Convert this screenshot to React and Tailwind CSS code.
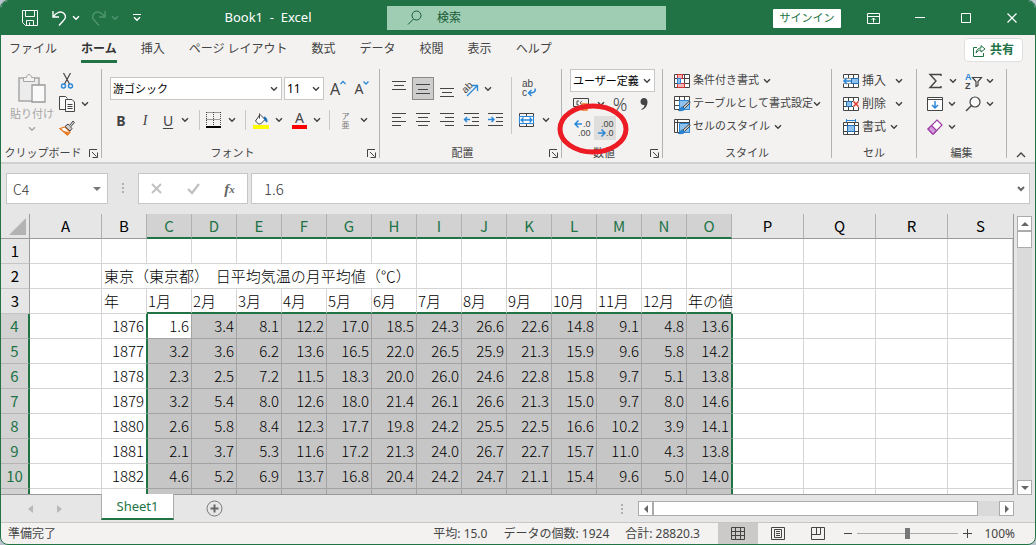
import React, { useState } from 'react';
import clsx from 'clsx';

const UI_FONT = "font-['Noto_Sans','Noto_Sans_CJK_JP',sans-serif]";
const SHEET_FONT = "font-['Noto_Sans_CJK_JP','Noto_Sans',sans-serif] font-light";

const ABAS = ['ファイル', 'ホーム', '挿入', 'ページ レイアウト', '数式', 'データ', '校閲', '表示', 'ヘルプ'];

const COLUNAS = ['A', 'B', 'C', 'D', 'E', 'F', 'G', 'H', 'I', 'J', 'K', 'L', 'M', 'N', 'O', 'P', 'Q', 'R', 'S'];
const MESES = ['1月', '2月', '3月', '4月', '5月', '6月', '7月', '8月', '9月', '10月', '11月', '12月', '年の値'];

const DADOS = [
  ['1876', '1.6', '3.4', '8.1', '12.2', '17.0', '18.5', '24.3', '26.6', '22.6', '14.8', '9.1', '4.8', '13.6'],
  ['1877', '3.2', '3.6', '6.2', '13.6', '16.5', '22.0', '26.5', '25.9', '21.3', '15.9', '9.6', '5.8', '14.2'],
  ['1878', '2.3', '2.5', '7.2', '11.5', '18.3', '20.0', '26.0', '24.6', '22.8', '15.8', '9.7', '5.1', '13.8'],
  ['1879', '3.2', '5.4', '8.0', '12.6', '18.0', '21.4', '26.1', '26.6', '21.3', '15.0', '9.7', '8.0', '14.6'],
  ['1880', '2.6', '5.8', '8.4', '12.3', '17.7', '19.8', '24.2', '25.5', '22.5', '16.6', '10.2', '3.9', '14.1'],
  ['1881', '2.1', '3.7', '5.3', '11.6', '17.2', '21.3', '24.0', '26.7', '22.7', '15.7', '11.0', '4.3', '13.8'],
  ['1882', '4.6', '5.2', '6.9', '13.7', '16.8', '20.4', '24.2', '24.7', '21.1', '15.4', '9.6', '5.0', '14.0'],
  ['', '', '', '', '', '', '', '', '', '', '', '', '', ''],
];

function Icone({ w = 16, h = 16, className, children }) {
  return (
    <svg width={w} height={h} viewBox={`0 0 ${w} ${h}`} fill="none" stroke="#444" className={clsx('shrink-0 overflow-visible', className)} aria-hidden="true">
      {children}
    </svg>
  );
}

function Seta({ className, cor = '#444' }) {
  return (
    <svg width="8" height="6" viewBox="0 0 8 6" fill="none" stroke={cor} strokeWidth="1.5" className={clsx('shrink-0', className)} aria-hidden="true">
      <path d="M1 1.2 4 4.2 7 1.2" />
    </svg>
  );
}

function Letra({ x, y, tam = 9, cor = '#444', ...resto }) {
  return <text x={x} y={y} fontSize={tam} stroke="none" fill={cor} fontFamily="Liberation Sans" {...resto} />;
}

function Botao({ label, className, children }) {
  return (
    <button type="button" aria-label={label} className={clsx('flex items-center justify-center shrink-0', className)}>
      {children}
    </button>
  );
}

function Grupo({ titulo, largura, launcher, children }) {
  return (
    <section className={clsx('relative flex flex-col shrink-0 h-[89px] border-r border-[#b3b3b3]', largura)}>
      <div className="h-[76px] shrink-0">{children}</div>
      <div className={clsx('relative flex items-center justify-center h-4 shrink-0 text-[11px] leading-4 text-[#444]', launcher && 'pr-4')}>
        {titulo}
        {launcher && (
          <button type="button" aria-label={`${titulo}の設定`} className="absolute right-[3px] top-1">
            <Icone w={9} h={9}>
              <path d="M.5 8V.5H8M3 3l4.5 4.5M8.5 3.500v5h-5" />
            </Icone>
          </button>
        )}
      </div>
    </section>
  );
}

function Caixa({ label, valor, className }) {
  return (
    <div className={clsx('relative flex h-[23px] border border-[#c6c6c6] bg-white', className)}>
      <select aria-label={label} defaultValue={valor} className="w-full appearance-none bg-transparent pl-[2px] leading-5 text-black outline-none">
        <option>{valor}</option>
      </select>
      <Seta className="absolute right-[3px] top-2 pointer-events-none" />
    </div>
  );
}

function Divisor({ className }) {
  return <span className={clsx('w-px shrink-0 bg-[#c8c8c8]', className)} />;
}

function Linhas({ linhas }) {
  return (
    <Icone w={14} h={16}>
      {linhas.map(([x1, x2, y]) => <path key={y} d={`M${x1} ${y}.5H${x2}`} />)}
    </Icone>
  );
}

function BarraTitulo() {
  return (
    <header className="flex items-center h-[34px] shrink-0 bg-[#217346] text-white">
      <div className="flex items-center w-[386px] shrink-0 pl-[21px]">
        <Botao label="上書き保存">
          <Icone>
            <path stroke="#fff" d="M.5.5h15v15H3.500l-3-3zM3.500.5v6h9v-6M4.500 15.500v-5h7v5M7.500 12.500v3" />
          </Icone>
        </Botao>
        <Botao label="元に戻す" className="ml-[14px] gap-[5px]">
          <Icone w={15}>
            <path stroke="#fff" strokeWidth="1.4" d="M1 1v6h6M1.500 6.500C4 2.500 9 .5 12 3.500c2.500 2.500 1.500 5-.5 7L7 15.500" />
          </Icone>
          <Seta cor="#fff" />
        </Botao>
        <Botao label="やり直し" className="ml-[11px] gap-[5px]">
          <Icone w={15}>
            <path stroke="#4f9470" strokeWidth="1.4" d="M14 1v6H8M13.500 6.500C11 2.500 6 .5 3 3.500c-2.500 2.500-1.500 5 .5 7L8 15.500" />
          </Icone>
          <Seta cor="#4f9470" />
        </Botao>
        <Botao label="クイック アクセス ツール バーのカスタマイズ" className="ml-[14px]">
          <Icone w={8} h={8}>
            <path stroke="#fff" d="M0 .5h8" />
            <path stroke="#fff" strokeWidth="1.400" d="M1 3.200 4 6.200l3-3" />
          </Icone>
        </Botao>
        <h1 className="flex-1 pl-2 text-center text-[13px] whitespace-pre">Book1  -  Excel</h1>
      </div>
      <label className="flex flex-1 items-center h-6 bg-[#9fcdb3] pl-5">
        <Icone>
          <circle stroke="#185c37" cx="9.500" cy="5.500" r="4.500" />
          <path stroke="#185c37" d="M6.500 9 1 14.500" />
        </Icone>
        <input type="search" aria-label="検索" placeholder="検索" className="ml-[14px] w-full bg-transparent text-[12px] leading-5 outline-none placeholder:text-[#185c37]" />
      </label>
      <div className="flex items-center shrink-0 ml-[107px] pr-[18px]">
        <button type="button" className="flex items-center justify-center w-[68px] h-[19px] rounded-[1px] bg-white text-[11px] leading-4 text-[#217346]">サインイン</button>
        <Botao label="リボンの表示オプション" className="ml-[26px]">
          <Icone w={13} h={11}>
            <path stroke="#fff" d="M.5.5h12v10H.5zM.5 3.500h12M6.500 9.500V5M4.500 7l2-2 2 2" />
          </Icone>
        </Botao>
        <Botao label="最小化" className="ml-[35px]">
          <Icone w={10} h={10}><path stroke="#fff" d="M0 4.500h10" /></Icone>
        </Botao>
        <Botao label="最大化" className="ml-9">
          <Icone w={10} h={10}><path stroke="#fff" d="M.5.5h9v9h-9z" /></Icone>
        </Botao>
        <Botao label="閉じる" className="ml-9">
          <Icone w={10} h={10}><path stroke="#fff" strokeWidth="1.200" d="M.5.5l9 9M9.500.5l-9 9" /></Icone>
        </Botao>
      </div>
    </header>
  );
}

function Abas() {
  return (
    <nav className="flex items-start h-[34px] shrink-0 pt-[3px] pl-2 pr-3">
      <div className="flex gap-6">
        {ABAS.map(aba => (
          <button
            key={aba}
            type="button"
            className={clsx(
              'h-[25px] border-b-3 text-[12px] leading-5 whitespace-nowrap',
              aba === 'ホーム' ? 'border-[#217346] font-bold text-[#333]' : 'border-transparent text-[#444]'
            )}
          >
            {aba}
          </button>
        ))}
      </div>
      <button type="button" className="ml-auto flex items-center justify-center gap-1 w-[59px] h-6 rounded-sm border border-[#e1dfdd] bg-white text-[12px] font-bold text-[#217346]">
        <Icone w={13} h={13}>
          <path stroke="#217346" d="M4 3.500H.5v9h10V9M3 9c.5-3.500 2.500-5 5-5V1.500L12 5 8 8V6C6 6 4.500 7 3 9z" />
        </Icone>
        共有
      </button>
    </nav>
  );
}

function AreaTransferencia() {
  return (
    <Grupo titulo="クリップボード" largura="w-[101px]" launcher>
      <div className="flex pl-2">
        <button type="button" className="flex flex-col items-center w-[46px] pt-1 text-[11px] leading-4 text-[#a6a6a6]">
          <Icone w={28} h={31}>
            <path fill="#ececec" stroke="#a6a6a6" strokeWidth="1.500" d="M1 5h20v23H1z" />
            <path fill="#f3f2f1" stroke="#a6a6a6" d="M5.500 8.500v-4h3c0-4 5-4 5 0h3v4z" />
            <path fill="#fafafa" stroke="#999" strokeWidth="1.300" d="M14 12h13v17H14z" />
          </Icone>
          <span className="mt-[2px]">貼り付け</span>
          <Seta cor="#a6a6a6" className="mt-1" />
        </button>
        <div className="flex flex-col pl-1">
          <Botao label="切り取り" className="w-4 h-[23px]">
            <Icone>
              <path strokeWidth="1.200" d="M4.500 0l6 11M11.500 0l-6 11" />
              <circle stroke="#2b88d8" strokeWidth="1.400" cx="4.500" cy="13" r="2" />
              <circle stroke="#2b88d8" strokeWidth="1.400" cx="11.500" cy="13" r="2" />
            </Icone>
          </Botao>
          <Botao label="コピー" className="h-6 gap-[6px]">
            <Icone>
              <path d="M6 13.500H.5V.5h6l2 2M9 3.500h4l2.500 2.500v9.500h-9v-12z" fill="#f9f9f9" />
              <path d="M8.500 8.500h5M8.500 10.500h5M8.500 12.500h5" />
            </Icone>
            <Seta />
          </Botao>
          <Botao label="書式のコピー/貼り付け" className="w-4 h-6">
            <Icone>
              <path fill="#fff" stroke="#e8781e" strokeWidth="1.300" d="M1 8.500l5-1.500 5 5-2.500 3z" />
              <path fill="#e8781e" stroke="none" d="M4 11l6 1-2 3z" />
              <path fill="#d2d0ce" d="M6 6.500 9 4l1.500 1.500L14 1l1.500 1.500L11.500 7 13 8.500 11 11z" />
            </Icone>
          </Botao>
        </div>
      </div>
    </Grupo>
  );
}

function Fonte() {
  return (
    <Grupo titulo="フォント" largura="w-[278px]" launcher>
      <div className="flex items-center pt-2 pl-2">
        <Caixa label="フォント" valor="游ゴシック" className="w-[172px] text-[11px]" />
        <Caixa label="フォント サイズ" valor="11" className="w-10 ml-[2px] text-[12px]" />
        <Botao label="フォント サイズの拡大" className="w-6 ml-[2px] text-[16px] leading-5 text-[#444]">
          A<Icone w={6} h={10} className="self-start"><path stroke="#2b88d8" strokeWidth="1.300" d="M.5 5 3 2.500 5.500 5" /></Icone>
        </Botao>
        <Botao label="フォント サイズの縮小" className="w-6 text-[14px] leading-5 text-[#444]">
          A<Icone w={6} h={10} className="self-start"><path stroke="#2b88d8" strokeWidth="1.300" d="M.5 2.500 3 5l2.500-2.500" /></Icone>
        </Botao>
      </div>
      <div className="flex items-center h-6 mt-2 pl-[7px] text-[14px] text-[#444]">
        <Botao label="太字" className="w-6 font-bold">B</Botao>
        <Botao label="斜体" className="w-6 italic font-['Liberation_Serif',serif]">I</Botao>
        <Botao label="下線" className="w-[22px] underline underline-offset-2">U</Botao>
        <Botao label="下線の種類" className="w-3"><Seta /></Botao>
        <Divisor className="h-5 ml-2 mr-[6px]" />
        <Botao label="罫線" className="w-7 gap-[7px] ml-px">
          <Icone w={15}>
            <path strokeDasharray="1 1" d="M.5.5h14M.5 7.500h14M.5 0v14M14.500 0v14M7.500 0v14" />
            <path stroke="#000" strokeWidth="2" d="M0 15h15" />
          </Icone>
          <Seta />
        </Botao>
        <Divisor className="h-5 ml-[10px] mr-[7px]" />
        <Botao label="塗りつぶしの色" className="w-[29px] gap-[6px]">
          <Icone h={17}>
            <path fill="#fff" d="M6.500 1.500v5M7 2.500l5 5-4.500 4.500h-2L2.500 9z" />
            <path fill="#1e6fb8" stroke="#1e6fb8" d="M11 5c2 0 3 1.500 3 5-1.500-.500-2.500-2-3-5z" />
            <path stroke="#ff0" strokeWidth="4" d="M0 15h16" />
          </Icone>
          <Seta />
        </Botao>
        <Botao label="フォントの色" className="w-[29px] gap-[6px] ml-[10px]">
          <span className="flex items-center justify-center w-4 h-[17px] border-b-4 border-[#f00] text-[14px] leading-3">A</span>
          <Seta />
        </Botao>
        <Divisor className="h-5 ml-2 mr-[10px]" />
        <Botao label="ふりがなの表示/非表示" className="w-[29px] gap-[10px]">
          <span className="flex flex-col items-center text-[8px] leading-[9px] text-[#777]"><span>ア</span><span>亜</span></span>
          <Seta />
        </Botao>
      </div>
    </Grupo>
  );
}

function Alinhamento() {
  return (
    <Grupo titulo="配置" largura="w-[182px]" launcher>
      <div className="flex pt-2 pl-[7px]">
        <div>
          <div className="flex items-center h-[23px]">
            <Botao label="上揃え" className="w-6"><Linhas linhas={[[0, 14, 0], [2, 12, 4], [0, 14, 8]]} /></Botao>
            <Botao label="上下中央揃え" className="w-[22px] h-[23px] mx-px border border-[#8a8a8a] bg-[#cdcdcd]"><Linhas linhas={[[0, 14, 3], [2, 12, 8], [0, 14, 12]]} /></Botao>
            <Botao label="下揃え" className="w-6"><Linhas linhas={[[0, 14, 7], [2, 12, 11], [0, 14, 15]]} /></Botao>
            <Botao label="方向" className="w-7 gap-[5px] ml-1">
              <Icone w={17}>
                <Letra x="0" y="10" tam={10} transform="rotate(-45 5 7)">ab</Letra>
                <path stroke="#2b88d8" strokeWidth="1.300" d="M5 15 15 5M10 4.500h5.500V10" />
              </Icone>
              <Seta />
            </Botao>
          </div>
          <div className="flex items-center h-6 mt-2">
            <Botao label="左揃え" className="w-6"><Linhas linhas={[[0, 14, 1], [0, 9, 5], [0, 14, 9], [0, 9, 13]]} /></Botao>
            <Botao label="中央揃え" className="w-6"><Linhas linhas={[[0, 14, 1], [2, 12, 5], [0, 14, 9], [2, 12, 13]]} /></Botao>
            <Botao label="右揃え" className="w-6"><Linhas linhas={[[0, 14, 1], [5, 14, 5], [0, 14, 9], [5, 14, 13]]} /></Botao>
            <Botao label="インデントを減らす" className="w-6">
              <Icone w={15}>
                <path d="M0 1.500h15M8 5.500h7M8 9.500h7M0 13.500h15" />
                <path stroke="#2b88d8" strokeWidth="1.400" d="M0 7.500h6M3 5 .5 7.500 3 10" />
              </Icone>
            </Botao>
            <Botao label="インデントを増やす" className="w-6">
              <Icone w={15}>
                <path d="M0 1.500h15M8 5.500h7M8 9.500h7M0 13.500h15" />
                <path stroke="#2b88d8" strokeWidth="1.400" d="M0 7.500h6M3.500 5 6 7.500 3.500 10" />
              </Icone>
            </Botao>
          </div>
        </div>
        <Divisor className="h-[57px] ml-1" />
        <div className="pl-[6px]">
          <Botao label="折り返して全体を表示する" className="w-[22px] h-[23px]">
            <Icone>
              <Letra x="1" y="6" tam={10}>ab</Letra>
              <Letra x="1" y="15" tam={10}>c</Letra>
              <path stroke="#2b88d8" strokeWidth="1.500" d="M14 7.500c1 3-1 4.500-6 4.500M10.500 9l-3 3 3 3" />
            </Icone>
          </Botao>
          <Botao label="セルを結合して中央揃え" className="h-6 mt-2 pl-px gap-2">
            <Icone w={15}>
              <path d="M.5 1.500h14v13H.5zM7.500 1.500v3M7.500 11.500v3" />
              <path fill="#fff" stroke="#2b88d8" d="M.5 4.500h14v7H.5z" />
              <path stroke="#2b88d8" strokeWidth="1.300" d="M2 8h11M4.500 5.500 2 8l2.500 2.500M10.500 5.500 13 8l-2.500 2.500" />
            </Icone>
            <Seta />
          </Botao>
        </div>
      </div>
    </Grupo>
  );
}

function Numero() {
  return (
    <Grupo titulo="数値" largura="w-[101px]" launcher>
      <div className="pl-2">
        <Caixa label="表示形式" valor="ユーザー定義" className="w-[85px] text-[11px]" />
        <div className="flex items-center h-6 text-[#444]">
          <Botao label="通貨表示形式" className="gap-2 pl-[3px]">
            <Icone>
              <path d="M.5 2.500h15v8H.5zM6 5h-2v4h2M9 5.500c-2-.500-2 3.500 0 3" />
              <path fill="#fff" stroke="#e8781e" strokeWidth="1.300" d="M9 8h5v6H9z" />
            </Icone>
            <Seta />
          </Botao>
          <Botao label="パーセント スタイル" className="w-6 ml-[3px] text-[18px] leading-6 font-light">%</Botao>
          <Botao label="桁区切りスタイル" className="w-6">
            <Icone w={8} h={12}>
              <path fill="#444" stroke="none" d="M4 0c2 0 3.500 1.500 3.500 4C7.500 8 5 11 1.500 12V11c2-1 3-2.500 3-4C2 7.500.5 6 .5 3.500.5 1.500 2 0 4 0z" />
            </Icone>
          </Botao>
        </div>
        <div className="flex items-center h-6">
          <Botao label="小数点以下の表示桁数を増やす" className="w-6 h-6">
            <Icone w={18} h={18}>
              <path stroke="#2b88d8" strokeWidth="1.500" d="M2 5h7M5.500 1.500 2 5l3.500 3.500" />
              <Letra x="10" y="8">.0</Letra>
              <Letra x="5" y="17">.00</Letra>
            </Icone>
          </Botao>
          <Botao label="小数点以下の表示桁数を減らす" className="w-[22px] h-6 bg-[#dfdedd]">
            <Icone w={18} h={18}>
              <Letra x="5" y="8">.00</Letra>
              <path stroke="#2b88d8" strokeWidth="1.500" d="M2 14h7M5.500 10.500 9 14l-3.500 3.500" />
              <Letra x="10" y="17">.0</Letra>
            </Icone>
          </Botao>
        </div>
      </div>
      {/* marcação vermelha sobre os botões de casas decimais */}
      <svg width="72" height="52" viewBox="0 0 72 52" className="absolute left-[-5px] top-[34px] z-10 pointer-events-none" aria-hidden="true">
        <ellipse cx="36" cy="26" rx="33" ry="23" fill="none" stroke="#ed1c24" strokeWidth="5" />
      </svg>
    </Grupo>
  );
}

function LinhaComando({ icone, texto, className = 'gap-1' }) {
  return (
    <button type="button" className="flex items-center gap-[3px] h-[23px] whitespace-nowrap">
      {icone}
      <span className={clsx('flex items-center', className)}>{texto}<Seta /></span>
    </button>
  );
}

const GRADE = 'M.5.5h15v13H.5zM.5 4.500h15M.5 9.500h15M5.500.5v13M10.500.5v13';

function Estilo() {
  const pincel = (
    <>
      <path fill="#8fc1ea" stroke="#2b88d8" d="M5.500 4.500h10v9h-10z" />
      <path fill="#d2d0ce" d="M15.500 5 9 11l1.500 1.500L16 7z" />
      <path fill="#2b88d8" stroke="#1e6fb8" d="M8.500 11c-2 0-2 2-4 3.500 3 .500 6 0 6-2z" />
    </>
  );
  return (
    <Grupo titulo="スタイル" largura="w-[169px]">
      <div className="flex flex-col items-start pl-[11px] text-[11px] text-[#444]">
        <LinhaComando
          texto="条件付き書式"
          icone={
            <Icone h={14}>
              <path fill="#fff" d={GRADE} />
              <path fill="#f8b4b4" stroke="#d13438" d="M3.500.5h5v4h-5zM3.500 9.500h7v4h-7z" />
              <path fill="#8fc1ea" stroke="#2b88d8" d="M3.500 4.500h3v5h-3z" />
            </Icone>
          }
        />
        <LinhaComando texto="テーブルとして書式設定" className="gap-0" icone={<Icone h={15}><path fill="#fff" d={GRADE} />{pincel}</Icone>} />
        <LinhaComando texto="セルのスタイル" icone={<Icone h={15}><path fill="#fff" d="M.5.5h15v13H.5zM.5 3.500h15M3.500.5v13" />{pincel}</Icone>} />
      </div>
    </Grupo>
  );
}

function Celulas() {
  return (
    <Grupo titulo="セル" largura="w-[85px]">
      <div className="flex flex-col items-start pl-[11px] text-[12px] text-[#444]">
        <LinhaComando
          texto="挿入"
          className="gap-[9px]"
          icone={
            <Icone h={14}>
              <path fill="#fff" d={GRADE} />
              <path fill="#8fc1ea" stroke="#1e6fb8" d="M8.500 4.500h7v5h-7z" />
              <path stroke="#f3f2f1" strokeWidth="5" d="M0 7h8" />
              <path stroke="#2b88d8" strokeWidth="1.500" d="M1 7h7M4 4 1 7l3 3" />
            </Icone>
          }
        />
        <LinhaComando
          texto="削除"
          className="gap-[9px]"
          icone={
            <Icone h={14}>
              <path fill="#fff" d={GRADE} />
              <path fill="#8fc1ea" stroke="#1e6fb8" d="M3.500 4.500h5v5h-5z" />
              <path stroke="#f3f2f1" strokeWidth="6" d="M10 7h6" />
              <path stroke="#e03c31" strokeWidth="1.500" d="M10.500 4.500l5 5M15.500 4.500l-5 5" />
            </Icone>
          }
        />
        <LinhaComando
          texto="書式"
          className="gap-1"
          icone={
            <Icone>
              <path stroke="#2b88d8" d="M3.500 0v3M12.500 0v3M3.500 1.500h9" />
              <path fill="#fff" d="M.5 3.500h15v12H.5zM.5 6.500h15M.5 12.500h15M4.500 3.500v12M11.500 3.500v12" />
              <path fill="#8fc1ea" stroke="#1e6fb8" d="M4.500 6.500h7v6h-7z" />
            </Icone>
          }
        />
      </div>
    </Grupo>
  );
}

function Edicao() {
  return (
    <Grupo titulo="編集" largura="w-[90px]">
      <div className="flex pl-[10px] gap-2">
        <div>
          <Botao label="合計" className="h-[23px] gap-[6px]">
            <Icone><path strokeWidth="1.400" d="M14 3V1.500H3L9 8l-6 6.500h11V13" /></Icone>
            <Seta />
          </Botao>
          <Botao label="フィル" className="h-[23px] gap-[5px]">
            <Icone>
              <path fill="#fff" d="M.5 1.500h15v13H.5zM.5 3.500h15" />
              <path stroke="#2b88d8" strokeWidth="1.500" d="M8 5v7M5 9l3 3 3-3" />
            </Icone>
            <Seta />
          </Botao>
          <Botao label="クリア" className="h-[23px] gap-[5px]">
            <Icone>
              <path fill="#fff" stroke="#9b3fa5" strokeWidth="1.200" d="M10 1 15 6l-8.500 9h-1L1 10z" />
              <path fill="#d59ade" stroke="#9b3fa5" strokeWidth="1.200" d="M4.500 6.500l5 5L6.500 15h-1L1 10z" />
            </Icone>
            <Seta />
          </Botao>
        </div>
        <div>
          <Botao label="並べ替えとフィルター" className="h-[23px] gap-1">
            <Icone w={17}>
              <Letra x="0" y="7" cor="#2b88d8" fontWeight="bold">A</Letra>
              <Letra x="0" y="16" fontWeight="bold">Z</Letra>
              <path strokeWidth="1.200" d="M7.500 4.500h9L13 8.500v4l-2 1v-5z" />
            </Icone>
            <Seta />
          </Botao>
          <Botao label="検索と選択" className="h-[23px] gap-[5px]">
            <Icone>
              <circle fill="#fafafa" strokeWidth="1.200" cx="10" cy="6" r="5" />
              <path strokeWidth="1.400" d="M6.500 9.500 1 15" />
            </Icone>
            <Seta />
          </Botao>
        </div>
      </div>
    </Grupo>
  );
}

function BarraFormulas() {
  return (
    <div className="flex shrink-0 pt-[9px] pb-[10px] pl-[5px] pr-[5px] bg-[#e6e6e6]">
      <label className="relative flex w-[102px] h-[31px] border border-[#c6c6c6] bg-white">
        <input aria-label="名前ボックス" defaultValue="C4" className={clsx('w-full bg-transparent pl-[6px] text-[14px] leading-7 text-[#333] outline-none', SHEET_FONT)} />
        <svg width="8" height="4" viewBox="0 0 8 4" className="absolute right-[6px] top-[13px]" aria-hidden="true"><path fill="#777" d="M0 0h8L4 4z" /></svg>
      </label>
      <Icone w={2} h={12} className="mx-[14px] self-center"><path stroke="#b0b0b0" strokeWidth="2" strokeDasharray="2 2" d="M1 0v12" /></Icone>
      <div className="flex items-center justify-around w-[110px] h-[31px] border border-[#c6c6c6] bg-white">
        <Botao label="キャンセル"><Icone w={11} h={11}><path stroke="#c0c0c0" strokeWidth="1.800" d="M1 1l9 9M10 1l-9 9" /></Icone></Botao>
        <Botao label="入力"><Icone w={13} h={11}><path stroke="#c0c0c0" strokeWidth="2.200" d="M1 6l4 4 7-9" /></Icone></Botao>
        <Botao label="関数の挿入" className="font-['Liberation_Serif',serif] text-[15px] leading-5 italic font-bold text-[#666]">f<span className="text-[11px]">x</span></Botao>
      </div>
      <label className="relative flex flex-1 h-[31px] ml-[3px] border border-[#c6c6c6] bg-white">
        <input aria-label="数式バー" defaultValue="1.6" className={clsx('w-full bg-transparent pl-3 text-[15px] leading-6 text-[#333] outline-none', SHEET_FONT)} />
        <Icone w={8} h={6} className="absolute right-1 top-3"><path stroke="#666" strokeWidth="2" d="M1 1l3 3 3-3" /></Icone>
      </label>
    </div>
  );
}

const selecionada = i => i >= 2 && i <= 14;

function CabecalhoLinha({ n, ativo }) {
  return (
    <th
      scope="row"
      className={clsx(
        'h-[25px] border-b p-0 text-center font-normal',
        ativo ? 'border-r-2 border-r-[#217346] border-b-[#b5b5b5] bg-[#d2d2d2] text-[#217346]' : 'border-r border-r-[#9b9b9b] border-b-[#c4c4c4] bg-[#e6e6e6] text-black'
      )}
    >
      {n}
    </th>
  );
}

const CELULA = 'h-[25px] border-r border-b border-[#d4d4d4] p-0';

function Planilha() {
  return (
    <div className="flex-1 min-w-0 overflow-hidden border-r border-b border-[#999] bg-white">
      <table className={clsx('w-full table-fixed border-separate border-spacing-0 text-[15px] leading-5 text-black', SHEET_FONT)}>
        <colgroup>
          <col className="w-[29px]" />
          {COLUNAS.map((c, i) => (
            <col key={c} className={clsx(i === 1 || selecionada(i) ? 'w-[45px]' : c !== 'S' && 'w-[72px]')} />
          ))}
        </colgroup>
        <thead>
          <tr>
            <td className="h-[25px] border-r border-b border-[#9b9b9b] bg-[#e6e6e6] p-0">
              <svg width="17" height="17" viewBox="0 0 17 17" className="ml-auto mr-[3px]" aria-hidden="true"><path fill="#b3b3b3" d="M17 0v17H0z" /></svg>
            </td>
            {COLUNAS.map((c, i) => (
              <th
                key={c}
                scope="col"
                className={clsx(
                  'h-[25px] p-0 font-normal',
                  c !== 'S' && 'border-r border-r-[#b0b0b0]',
                  selecionada(i) ? 'border-b-2 border-b-[#217346] bg-[#d2d2d2] text-[#217346]' : 'border-b border-b-[#999] bg-[#e6e6e6]'
                )}
              >
                {c}
              </th>
            ))}
          </tr>
        </thead>
        <tbody>
          <tr>
            <CabecalhoLinha n={1} />
            {COLUNAS.map(c => <td key={c} className={CELULA} />)}
          </tr>
          <tr>
            <CabecalhoLinha n={2} />
            <td className={CELULA} />
            <td colSpan={7} className={clsx(CELULA, 'pl-[2px] whitespace-pre')}>{'東京（東京都）  日平均気温の月平均値（℃）'}</td>
            {COLUNAS.slice(8).map(c => <td key={c} className={CELULA} />)}
          </tr>
          <tr>
            <CabecalhoLinha n={3} />
            <td className={CELULA} />
            <td className={clsx(CELULA, 'pl-[2px]')}>年</td>
            {MESES.map(m => (
              <td key={m} className="h-[25px] border-r border-b-2 border-r-[#d4d4d4] border-b-[#217346] p-0 pl-px whitespace-nowrap">{m}</td>
            ))}
            {COLUNAS.slice(15).map(c => <td key={c} className={CELULA} />)}
          </tr>
          {DADOS.map((linha, r) => (
            <tr key={r}>
              <CabecalhoLinha n={r < 7 ? r + 4 : ''} ativo />
              <td className={CELULA} />
              {linha.map((v, i) => (
                <td
                  key={i}
                  className={clsx(
                    'h-[25px] border-b border-r p-0 pr-[2px] text-right',
                    i === 0 && 'border-b-[#d4d4d4] border-r-[#217346]',
                    i === 1 && 'border-l border-l-[#217346]',
                    i > 0 && 'border-b-[#a3a3a3]',
                    i > 0 && (i === 13 ? 'border-r-[#217346]' : 'border-r-[#a3a3a3]'),
                    i > 0 && !(r === 0 && i === 1) && 'bg-[#c6c6c6]'
                  )}
                >
                  {v}
                </td>
              ))}
              {COLUNAS.slice(15).map((c, i) => (
                <td key={c} className={clsx('h-[25px] border-r border-b border-r-[#d4d4d4] border-b-[#d4d4d4] p-0', i === 0 && 'border-l border-l-[#217346]')} />
              ))}
            </tr>
          ))}
        </tbody>
      </table>
    </div>
  );
}

function BotaoRolagem({ label, d, className }) {
  return (
    <Botao label={label} className={clsx('w-[15px] h-[15px] border border-[#ababab] bg-white', className)}>
      <svg width="8" height="8" viewBox="0 0 8 8" aria-hidden="true"><path fill="#666" d={d} /></svg>
    </Botao>
  );
}

function BarraPlanilhas() {
  return (
    <div className="flex items-start h-7 shrink-0 border-b border-[#c6c6c6] bg-[#e6e6e6]">
      <div className="flex items-center justify-center gap-6 w-[100px] h-[27px] shrink-0 pr-3">
        <Botao label="前のシート"><svg width="5" height="8" viewBox="0 0 5 8"><path fill="#b8b8b8" d="M5 0v8L0 4z" /></svg></Botao>
        <Botao label="次のシート"><svg width="5" height="8" viewBox="0 0 5 8"><path fill="#b8b8b8" d="M0 0v8l5-4z" /></svg></Botao>
      </div>
      <button type="button" className="relative -mt-px w-[73px] h-[26px] shrink-0 border-x border-b-2 border-x-[#ababab] border-b-[#217346] bg-white text-[13px] leading-6 text-[#217346]">Sheet1</button>
      <Botao label="新しいシート" className="ml-8 mt-[5px]">
        <Icone w={17} h={17}>
          <circle stroke="#777" cx="8.500" cy="8.500" r="7.500" />
          <path stroke="#666" strokeWidth="2" d="M4.500 8.500h8M8.500 4.500v8" />
        </Icone>
      </Botao>
      <div className="flex items-center ml-auto mt-[6px] mr-[21px] w-[393px]">
        <Icone w={2} h={10}><path stroke="#b0b0b0" strokeWidth="2" strokeDasharray="2 2" d="M1 0v10" /></Icone>
        <BotaoRolagem label="左へスクロール" d="M6 0v8L2 4z" className="ml-[15px]" />
        <div className="flex flex-1 h-[15px] bg-[#dadada]">
          <span className="w-[94%] border border-[#ababab] bg-white" />
        </div>
        <BotaoRolagem label="右へスクロール" d="M2 0v8l4-4z" />
      </div>
    </div>
  );
}

function BarraStatus() {
  const [zoom, setZoom] = useState(100);
  return (
    <footer className="flex items-center h-[21px] shrink-0 pl-[7px] pr-5 text-[12px] leading-5 text-[#444] whitespace-nowrap">
      <span>準備完了</span>
      <div className="flex gap-4 ml-auto">
        <span>平均: 15.0</span>
        <span>データの個数: 1924</span>
        <span>合計: 28820.3</span>
      </div>
      <Botao label="標準" className="w-10 h-[21px] ml-[18px] bg-[#cbcac9]">
        <Icone w={14} h={13}><path d="M.5.5h13v12H.5zM.5 4.500h13M.5 8.500h13M4.500.5v12M9.500.5v12" /></Icone>
      </Botao>
      <Botao label="ページ レイアウト" className="w-10">
        <Icone w={14} h={13}><path d="M.5.5h13v12H.5zM3.500 2.500h7v8h-7zM5 4.500h4M5 6.500h4M5 8.500h4" /></Icone>
      </Botao>
      <Botao label="改ページ プレビュー" className="w-10">
        <Icone w={14} h={13}><path d="M.5.5h13v12H.5zM.5 7.500h9v-7M5.500.5v7" /></Icone>
      </Botao>
      <Botao label="縮小" className="ml-[6px]"><Icone w={8} h={9}><path d="M0 4.500h8" /></Icone></Botao>
      <input
        type="range"
        aria-label="ズーム"
        min="0"
        max="200"
        value={zoom}
        onChange={e => setZoom(Number(e.target.value))}
        className="w-[101px] h-3 mx-[5px] appearance-none bg-transparent [&::-webkit-slider-runnable-track]:h-px [&::-webkit-slider-runnable-track]:bg-[#ababab] [&::-webkit-slider-thumb]:appearance-none [&::-webkit-slider-thumb]:w-[5px] [&::-webkit-slider-thumb]:h-[11px] [&::-webkit-slider-thumb]:-mt-[5px] [&::-webkit-slider-thumb]:bg-[#777]"
      />
      <Botao label="拡大"><Icone w={9} h={9}><path d="M0 4.500h9M4.500 0v9" /></Icone></Botao>
      <span className="w-[43px] text-right">{zoom}%</span>
    </footer>
  );
}

export default function App() {
  return (
    <div className="h-screen bg-[#b9c4cf]">
      <div className={clsx('flex flex-col h-full overflow-hidden rounded-lg border border-[#217346] bg-[#f3f2f1]', UI_FONT)}>
        <BarraTitulo />
        <Abas />
        <div className="flex h-[93px] shrink-0">
          <AreaTransferencia />
          <Fonte />
          <Alinhamento />
          <Numero />
          <Estilo />
          <Celulas />
          <Edicao />
          <Botao label="リボンを折りたたむ" className="ml-auto self-end mb-1 mr-[9px]">
            <Icone w={10} h={6}><path strokeWidth="1.400" d="M1 5l4-4 4 4" /></Icone>
          </Botao>
        </div>
        <div className="h-[2px] shrink-0 bg-[#d0d0d0]" />
        <BarraFormulas />
        <main className="flex flex-1 min-h-0 bg-[#e6e6e6]">
          <Planilha />
          <div className="flex flex-col w-[15px] shrink-0 mt-[2px] mx-[3px] bg-[#dadada]">
            <BotaoRolagem label="上へスクロール" d="M0 6h8L4 2z" />
            <span className="h-[17px] border border-[#ababab] bg-white" />
            <BotaoRolagem label="下へスクロール" d="M0 2h8L4 6z" className="mt-auto" />
          </div>
        </main>
        <BarraPlanilhas />
        <BarraStatus />
      </div>
    </div>
  );
}
